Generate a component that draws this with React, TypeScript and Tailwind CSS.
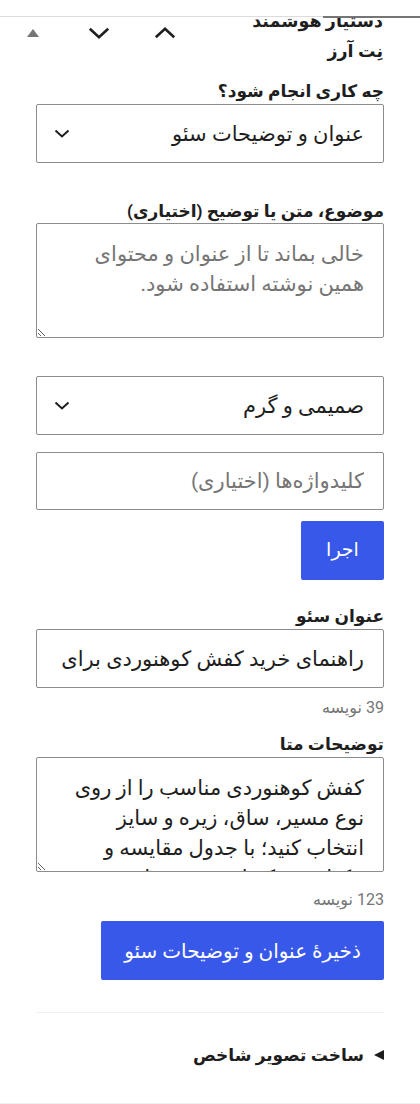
import React from "react";

const FONT = { fontFamily: 'Roboto, "DejaVu Sans", sans-serif' };

function ChevronDown({ w = 22, h = 12, sw = 2.6 }: { w?: number; h?: number; sw?: number }) {
  return (
    <svg width={w} height={h} viewBox={`0 0 ${w} ${h}`} fill="none">
      <polyline
        points={`${sw / 2 + 0.5},${sw / 2 + 0.5} ${w / 2},${h - sw / 2 - 0.5} ${w - sw / 2 - 0.5},${sw / 2 + 0.5}`}
        stroke="#1e1e1e"
        strokeWidth={sw}
      />
    </svg>
  );
}

function ChevronUp({ w = 22, h = 12, sw = 2.6 }: { w?: number; h?: number; sw?: number }) {
  return (
    <svg width={w} height={h} viewBox={`0 0 ${w} ${h}`} fill="none">
      <polyline
        points={`${sw / 2 + 0.5},${h - sw / 2 - 0.5} ${w / 2},${sw / 2 + 0.5} ${w - sw / 2 - 0.5},${h - sw / 2 - 0.5}`}
        stroke="#1e1e1e"
        strokeWidth={sw}
      />
    </svg>
  );
}

function FakeSelect({ value }: { value: string }) {
  return (
    <div className="flex h-[59px] w-full items-center justify-between rounded-[2px] border border-[#8c8c8c] bg-white pr-[19px] pl-[17px]">
      <span className="text-[21px] leading-[30px] text-[#1e1e1e]">{value}</span>
      <ChevronDown w={16} h={9} sw={2} />
    </div>
  );
}

function Label({ children }: { children: React.ReactNode }) {
  return <div className="h-[24px] text-[17px] font-bold leading-[24px] text-[#1e1e1e]">{children}</div>;
}

export default function App() {
  return (
    <div dir="rtl" style={FONT} className="relative h-[1104px] w-[420px] overflow-hidden bg-white text-[#1e1e1e]">
      <div className="h-[16px]" />
      <div className="flex h-[2px] items-start">
        <div className="h-[2px] w-[97px] bg-[#757575]" />
        <div className="h-px flex-1 bg-[#dcdcdc]" />
      </div>

      <div className="flex h-[61px] items-start justify-between pr-[37px]">
        <div className="h-[50px] overflow-hidden">
          <div className="mt-[-12px] text-[17.5px] font-bold leading-[30px]">
            دستیار هوشمند
            <br />
            نِت آرز
          </div>
        </div>
        <div dir="ltr" className="flex h-[30px] items-center">
          <button className="flex h-[30px] w-[66px] items-center justify-center" aria-label="toggle">
            <svg width="12" height="8" viewBox="0 0 12 8">
              <polygon points="6,0 12,8 0,8" fill="#757575" />
            </svg>
          </button>
          <button className="flex h-[30px] w-[66px] items-center justify-center" aria-label="down">
            <ChevronDown />
          </button>
          <button className="flex h-[30px] w-[66px] items-center justify-center" aria-label="up">
            <ChevronUp />
          </button>
        </div>
      </div>

      <div className="px-[36px]">
        <Label>چه کاری انجام شود؟</Label>
        <div className="mt-[1px]">
          <FakeSelect value="عنوان و توضیحات سئو" />
        </div>

        <div className="mt-[36px]">
          <Label>موضوع، متن یا توضیح (اختیاری)</Label>
        </div>
        <textarea
          className="mt-0 block h-[115px] w-full resize-y overflow-hidden rounded-[2px] border border-[#8c8c8c] bg-white px-[19px] py-[15px] text-[21px] leading-[30px] text-[#1e1e1e] placeholder:text-[#757575] focus:outline-none"
          placeholder="خالی بماند تا از عنوان و محتوای همین نوشته استفاده شود."
        />

        <div className="mt-[38px]">
          <FakeSelect value="صمیمی و گرم" />
        </div>

        <input
          className="mt-[17px] block h-[58px] w-full rounded-[2px] border border-[#8c8c8c] bg-white px-[19px] text-[21px] leading-[30px] text-[#1e1e1e] placeholder:text-[#757575] focus:outline-none"
          placeholder="کلیدواژه‌ها (اختیاری)"
        />

        <div className="mt-[11px] flex">
          <button className="flex h-[59px] w-[83px] items-center justify-center rounded-[2px] bg-[#3858e9] text-[19px] text-white">
            اجرا
          </button>
        </div>

        <div className="mt-[24px]">
          <Label>عنوان سئو</Label>
        </div>
        <input
          className="mt-[1px] block h-[59px] w-full rounded-[2px] border border-[#8c8c8c] bg-white px-[19px] text-[21px] leading-[30px] text-[#1e1e1e] focus:outline-none"
          readOnly
          value="راهنمای خرید کفش کوهنوردی برای انتخاب مسیر مناسب"
        />
        <div className="mt-[10px] h-[20px] text-[16px] leading-[20px] text-[#757575]">39 نویسه</div>

        <div className="mt-[14px]">
          <Label>توضیحات متا</Label>
        </div>
        <textarea
          className="mt-[1px] block h-[115px] w-full resize-y overflow-hidden rounded-[2px] border border-[#8c8c8c] bg-white px-[19px] py-[15px] text-[21px] leading-[30px] text-[#1e1e1e] focus:outline-none"
          readOnly
          value="کفش کوهنوردی مناسب را از روی نوع مسیر، ساق، زیره و سایز انتخاب کنید؛ با جدول مقایسه و چک‌لیست کوتاه، خرید مطمئن‌تری داشته باشید."
        />
        <div className="mt-[18px] h-[20px] text-[16px] leading-[20px] text-[#757575]">123 نویسه</div>

        <div className="mt-[11px] flex">
          <button className="flex h-[59px] w-[283px] items-center justify-center rounded-[2px] bg-[#3858e9] text-[20px] text-white">
            ذخیرهٔ عنوان و توضیحات سئو
          </button>
        </div>

        <div className="mt-[32px] h-px w-full bg-[#f0f0f0]" />

        <div className="mt-[30px] flex h-[24px] items-center gap-[10px]">
          <svg width="10" height="10" viewBox="0 0 10 10">
            <polygon points="0,5 10,0 10,10" fill="#1e1e1e" />
          </svg>
          <span className="text-[17px] font-bold leading-[24px]">ساخت تصویر شاخص</span>
        </div>
      </div>

      <div className="absolute bottom-0 left-0 h-px w-full bg-[#f0f0f0]" />
    </div>
  );
}
